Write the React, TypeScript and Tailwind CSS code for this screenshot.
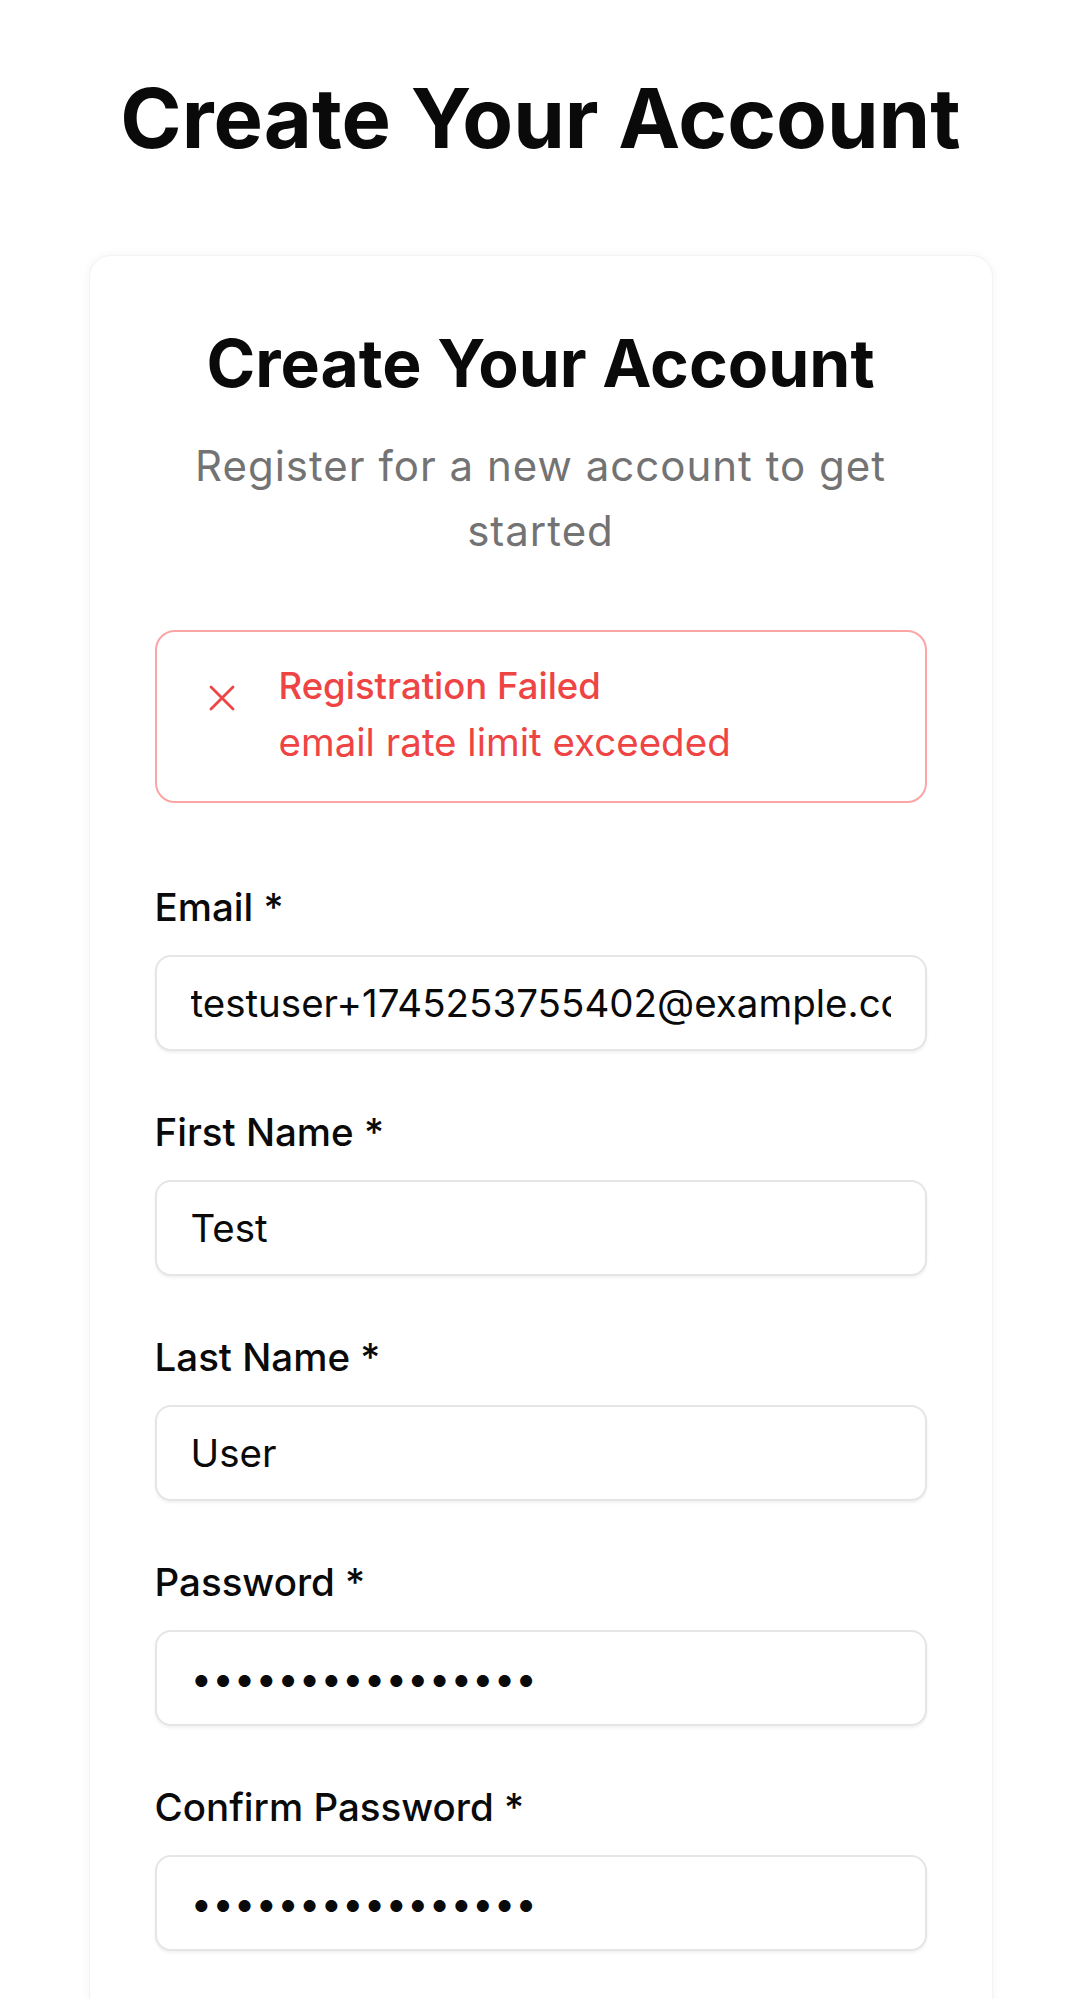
import React from "react";

function Field({ label, value, type = "text" }: { label: string; value: string; type?: string }) {
  return (
    <div className="flex flex-col">
      <label className="text-[38.5px] font-medium leading-[54px] text-[#0a0a0a]">{label}</label>
      <input
        type={type}
        defaultValue={value}
        readOnly
        className="mt-[21px] h-[96px] w-full rounded-[16px] border-2 border-[#e5e5e5] bg-white px-[34px] text-[38.5px] text-[#0a0a0a] shadow-[0_2px_3px_rgba(0,0,0,0.06)] outline-none"
        style={{ fontFamily: "Inter, sans-serif" }}
      />
    </div>
  );
}

export default function App() {
  return (
    <div className="min-h-screen bg-white font-['Inter',sans-serif] text-[#0a0a0a]">
      <h1 className="pt-[68px] text-center text-[83px] font-bold leading-[100px]">Create Your Account</h1>
      <div className="mx-auto mt-[87px] w-[904px] rounded-[22px] border border-[#f3f3f3] bg-white px-[65px] pb-[66px] pt-[67px] shadow-[0_0_10px_rgba(0,0,0,0.05)]">
        <h2 className="text-center text-[66px] font-bold leading-[80px]">Create Your Account</h2>
        <p className="mt-[30px] text-center text-[42px] leading-[65px] tracking-[1px] text-[#737373]">
          Register for a new account to get started
        </p>
        <div className="mt-[67px] flex items-start rounded-[20px] border-2 border-[#fca5a5] pb-[32px] pl-[52px] pr-[40px] pt-[27px]">
          <svg className="mt-[26px] shrink-0" width="26" height="26" viewBox="0 0 26 26" fill="none">
            <path d="M2 2L24 24M24 2L2 24" stroke="#ef4444" strokeWidth="2.8" strokeLinecap="round" />
          </svg>
          <div className="ml-[44px] text-[#ef4444]">
            <div className="text-[36.5px] font-medium leading-[54px]">Registration Failed</div>
            <div className="mt-[2px] text-[38.5px] leading-[54px]">email rate limit exceeded</div>
          </div>
        </div>
        <div className="mt-[77px] flex flex-col gap-[54px]">
          <Field label="Email *" value="testuser+1745253755402@example.com" type="email" />
          <Field label="First Name *" value="Test" />
          <Field label="Last Name *" value="User" />
          <Field label="Password *" value="TestPassword123!" type="password" />
          <Field label="Confirm Password *" value="TestPassword123!" type="password" />
        </div>
      </div>
    </div>
  );
}
